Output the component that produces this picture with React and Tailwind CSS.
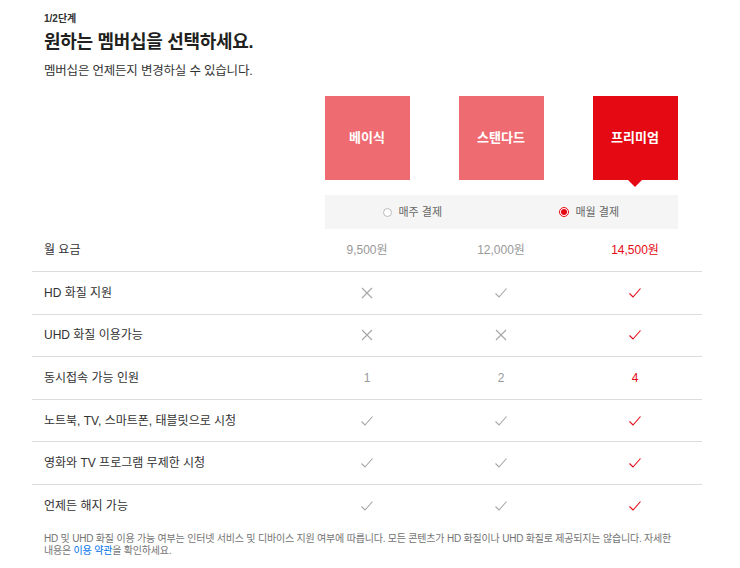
const font = { fontFamily: '"Liberation Sans", "Noto Sans CJK KR", sans-serif' }

const plans = [
  { name: '베이식', price: '9,500원' },
  { name: '스탠다드', price: '12,000원' },
  { name: '프리미엄', price: '14,500원' },
]

const rows = [
  { label: 'HD 화질 지원', values: ['x', 'v', 'v'] },
  { label: 'UHD 화질 이용가능', values: ['x', 'x', 'v'] },
  { label: '동시접속 가능 인원', values: ['1', '2', '4'] },
  { label: '노트북, TV, 스마트폰, 태블릿으로 시청', values: ['v', 'v', 'v'] },
  { label: '영화와 TV 프로그램 무제한 시청', values: ['v', 'v', 'v'] },
  { label: '언제든 해지 가능', values: ['v', 'v', 'v'] },
]

function Check({ color }) {
  return (
    <svg width="14" height="12" viewBox="0 0 14 12" fill="none" stroke={color} strokeWidth="1.1">
      <path d="M1.5 6.5 L5 10 L12.5 1.5" />
    </svg>
  )
}

function Cross({ color }) {
  return (
    <svg width="12" height="12" viewBox="0 0 12 12" fill="none" stroke={color} strokeWidth="1.1">
      <path d="M1 1 L11 11 M11 1 L1 11" />
    </svg>
  )
}

function Cell({ value, active }) {
  const color = active ? '#e50914' : '#a6a6a6'
  if (value === 'v') return <Check color={color} />
  if (value === 'x') return <Cross color={color} />
  return <span className={`text-[12px] ${active ? 'text-[#e50914]' : 'text-[#999]'}`}>{value}</span>
}

export default function App() {
  return (
    <div className="bg-white w-[740px] h-[568px] overflow-hidden px-[32px] pt-[12px] text-[#333]" style={font}>
      <div className="pl-[12px]">
        <p className="text-[10px] font-bold text-[#333] leading-[14px]">1/2단계</p>
        <h1 className="text-[18px] font-bold text-[#221f1f] leading-[26px] mt-[3px] tracking-[-0.3px]">원하는 멤버십을 선택하세요.</h1>
        <p className="text-[12.5px] text-[#333] leading-[16px] mt-[8px] tracking-[-0.2px]">멤버십은 언제든지 변경하실 수 있습니다.</p>
      </div>

      <div className="w-[670px]">
        <div className="flex mt-[17px]">
          <div className="w-[268px]" />
          {plans.map((p, i) => (
            <div key={p.name} className="w-[134px] flex justify-center">
              <div
                className={`relative w-[85px] h-[84px] flex items-center justify-center text-white font-bold text-[13px] ${
                  i === 2 ? 'bg-[#e50914]' : 'bg-[#ef6b72]'
                }`}
              >
                {p.name}
                {i === 2 && (
                  <div className="absolute left-1/2 -translate-x-1/2 top-full w-0 h-0 border-l-[7px] border-r-[7px] border-t-[7px] border-l-transparent border-r-transparent border-t-[#e50914]" />
                )}
              </div>
            </div>
          ))}
        </div>

        <div className="flex mt-[15px]">
          <div className="w-[268px]" />
          <div className="w-[402px] flex justify-center">
            <div className="w-[353px] h-[34px] bg-[#f5f5f5] flex text-[11px] text-[#666]">
              <div className="flex-1 flex items-center justify-center gap-[6px]">
                <span className="w-[9px] h-[9px] rounded-full border border-[#bbb] bg-white" />
                <span>매주 결제</span>
              </div>
              <div className="flex-1 flex items-center justify-center gap-[6px]">
                <span className="w-[10px] h-[10px] rounded-full border border-[#e50914] bg-white flex items-center justify-center">
                  <span className="w-[6px] h-[6px] rounded-full bg-[#e50914]" />
                </span>
                <span>매월 결제</span>
              </div>
            </div>
          </div>
        </div>

        <div className="flex h-[43px] items-center border-b border-[#dcdcdc]">
          <div className="w-[268px] pl-[12px] text-[12px]">월 요금</div>
          {plans.map((p, i) => (
            <div
              key={p.name}
              className={`w-[134px] text-center text-[12px] ${i === 2 ? 'text-[#e50914]' : 'text-[#999]'}`}
            >
              {p.price}
            </div>
          ))}
        </div>

        {rows.map((r, ri) => (
          <div
            key={r.label}
            className={`flex h-[42.6px] items-center ${ri < rows.length - 1 ? 'border-b border-[#dcdcdc]' : ''}`}
          >
            <div className="w-[268px] pl-[12px] text-[12px]">{r.label}</div>
            {r.values.map((v, i) => (
              <div key={i} className="w-[134px] flex justify-center">
                <Cell value={v} active={i === 2} />
              </div>
            ))}
          </div>
        ))}
      </div>

      <p className="text-[10px] leading-[12px] text-[#737373] mt-[5px] pl-[12px] tracking-[-0.2px] whitespace-nowrap">
        HD 및 UHD 화질 이용 가능 여부는 인터넷 서비스 및 디바이스 지원 여부에 따릅니다. 모든 콘텐츠가 HD 화질이나 UHD 화질로 제공되지는 않습니다. 자세한
        <br />
        내용은 <span className="text-[#0071eb]">이용 약관</span>을 확인하세요.
      </p>
    </div>
  )
}
